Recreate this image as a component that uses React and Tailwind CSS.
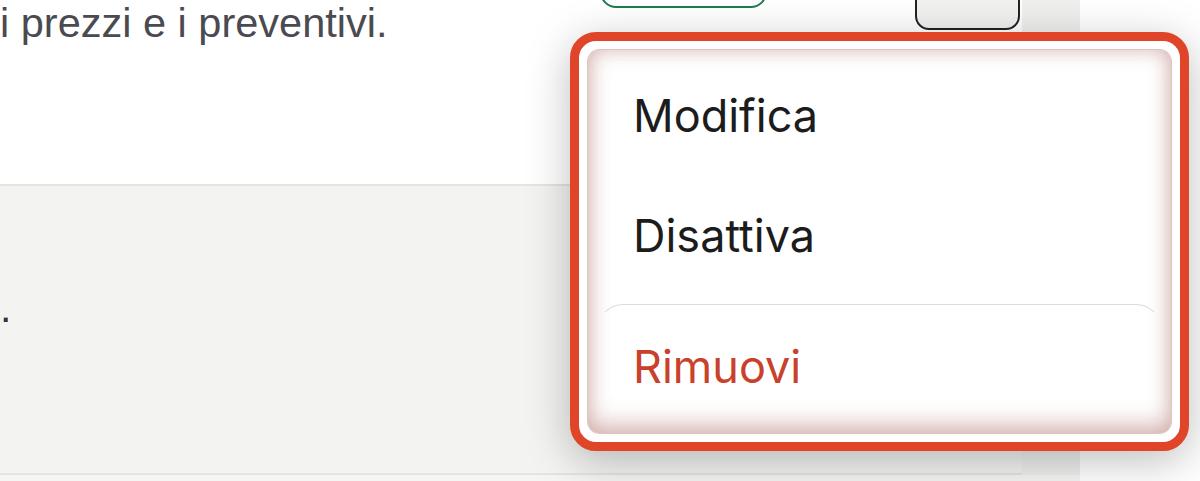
export default function App() {
  const items = ["Modifica", "Disattiva"];

  return (
    <div className="relative w-[1200px] h-[481px] overflow-hidden bg-white flex">
      {/* page column */}
      <div className="w-[1080px] h-full bg-[#efefed] flex flex-col">
        <div className="w-[1022px] flex flex-col">
          {/* top white section */}
          <div className="h-[186px] bg-white border-b-2 border-[#e4e4e0] flex items-start">
            <p className="w-[600px] -mt-[1px] text-[41.5px] leading-[48px] text-[#4a4a50] font-['Liberation_Sans',Arial,sans-serif] whitespace-nowrap">
              i prezzi e i preventivi.
            </p>
            <button className="w-[167px] h-[40px] -mt-[32px] rounded-[16px] border-2 border-[#1f7a50] bg-white" />
            <button className="ml-[148px] w-[105px] h-[50px] -mt-[20px] rounded-[14px] border-2 border-[#222] bg-[#f1f1f0]" />
          </div>

          {/* gray section */}
          <div className="h-[289px] bg-[#f3f3f1] border-b-2 border-[#e4e4e0] pt-[98px]">
            <p className="text-[41px] leading-[48px] text-[#333] font-['Liberation_Sans',Arial,sans-serif]">
              .
            </p>
          </div>
        </div>
        <div className="flex-1 bg-[#f5f5f3]" />
      </div>
      <div className="flex-1 bg-white" />

      {/* dropdown menu overlay */}
      <div className="absolute left-[570px] top-[32px] w-[619px] h-[419px] rounded-[26px] border-[9px] border-[#e0452a] bg-white p-[8px] shadow-[0_10px_44px_rgba(0,0,0,0.26)]">
        <div className="h-full rounded-[12px] border border-[#dcc6c1] bg-white shadow-[inset_0_0_20px_rgba(160,90,80,0.38),inset_0_-12px_22px_rgba(170,100,90,0.25)] pt-[5px] flex flex-col font-['Inter',sans-serif]">
          {items.map((label) => (
            <div
              key={label}
              className="h-[120px] pl-[45px] flex items-center text-[45px] leading-[53px] text-[#1c1c1c]"
            >
              {label}
            </div>
          ))}
          <div className="mt-[9px] mx-[9px] flex-1 rounded-t-[26px] border-t border-x border-t-[#dcdcdc] border-x-transparent pl-[35px] pt-[35px] text-[45px] leading-[53px] text-[#c9412b]">
            Rimuovi
          </div>
        </div>
      </div>
    </div>
  );
}
